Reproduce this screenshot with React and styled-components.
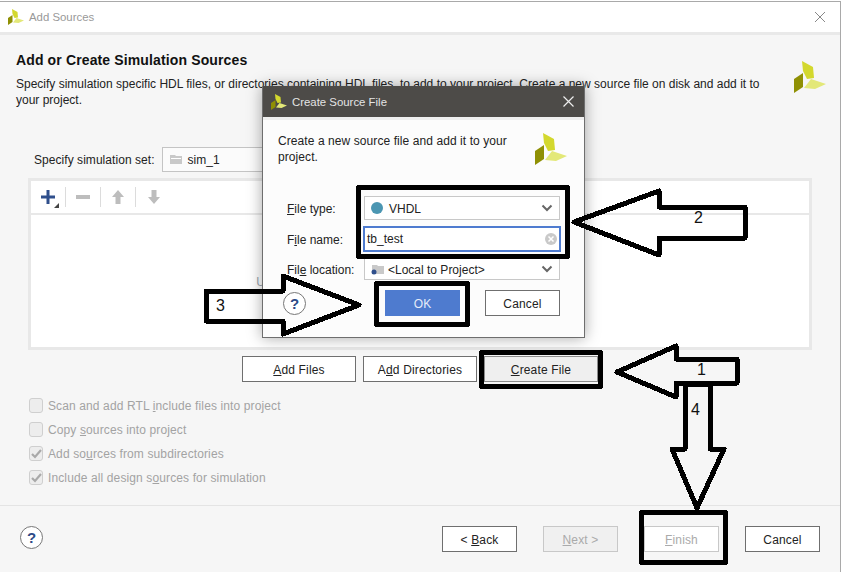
import React from "react";
import styled, { createGlobalStyle } from "styled-components";

const GlobalStyle = createGlobalStyle`
  html, body {
    margin: 0;
    padding: 0;
    background: #fff;
  }
  body {
    font-family: "Liberation Sans", Arial, sans-serif;
    font-size: 12px;
    color: #222;
  }
  * {
    box-sizing: border-box;
  }
`;

const Page = styled.div`
  position: relative;
  width: 842px;
  height: 572px;
  overflow: hidden;
  padding-top: 1px;
`;

const Wizard = styled.div`
  width: 841px;
  height: 571px;
  border-top: 1px solid #a9a9a9;
  border-right: 1px solid #a9a9a9;
  background: #f6f6f6;
  display: flex;
  flex-direction: column;
`;

const TitleBar = styled.div`
  height: 33px;
  flex: none;
  background: #fff;
  border-bottom: 3px solid #e9e9e9;
  display: flex;
  align-items: center;
  padding: 0 14px 0 8px;
  gap: 5px;
  color: #999;
`;

const TitleText = styled.span`
  flex: 1;
  font-size: 11.4px;
`;

const Header = styled.div`
  display: flex;
  justify-content: space-between;
  padding: 15px 14px 0 16px;
  height: 112px;
  flex: none;
`;

const Heading = styled.h1`
  margin: 0 0 6px;
  font-size: 14px;
  line-height: 20px;
  font-weight: bold;
  letter-spacing: 0.13px;
  color: #111;
`;

const Description = styled.p`
  margin: 0;
  width: 745px;
  line-height: 16px;
`;

const LogoSlot = styled.div`
  padding-top: 11px;
`;

const SetRow = styled.div`
  display: flex;
  align-items: center;
  height: 25px;
  margin-left: 34px;
  gap: 7px;
  flex: none;
  letter-spacing: 0.05px;
`;

const SetField = styled.div`
  width: 240px;
  height: 25px;
  border: 1px solid #c4c4c4;
  background: #fbfbfb;
  display: flex;
  align-items: center;
  gap: 6px;
  padding-left: 7px;
`;

const SourcesPanel = styled.div`
  width: 784px;
  height: 172px;
  flex: none;
  margin: 6px 0 0 28px;
  border: 3px solid #e8e8e8;
  background: #fff;
  display: flex;
  flex-direction: column;
`;

const Toolbar = styled.div`
  height: 34px;
  flex: none;
  border-bottom: 2px solid #e8e8e8;
  display: flex;
  align-items: center;
`;

const ToolButton = styled.div`
  position: relative;
  width: 35px;
  height: 20px;
  display: flex;
  align-items: center;
  justify-content: center;
  border-right: ${(p) => (p.$last ? "none" : "1px solid #dcdcdc")};
`;

const MoreMark = styled.span`
  position: absolute;
  right: 6px;
  bottom: -1px;
  width: 0;
  height: 0;
  border-style: solid;
  border-width: 0 0 5px 5px;
  border-color: transparent transparent #444 transparent;
`;

const EmptyHint = styled.div`
  flex: 1;
  display: flex;
  align-items: center;
  justify-content: center;
  padding-top: 1px;
  color: #9aa4ad;
  letter-spacing: 0.2px;
`;

const ActionRow = styled.div`
  display: flex;
  gap: 7px;
  margin: 6px 0 0 242px;
  flex: none;
`;

const Button = styled.div`
  width: ${(p) => p.$width || 75}px;
  height: 26px;
  padding-top: 2px;
  letter-spacing: 0.15px;
  display: flex;
  align-items: center;
  justify-content: center;
  flex: none;
  border: 1px solid ${(p) => (p.$disabled ? "#c8c8c8" : p.$pressed ? "#8c8c8c" : "#6f6f6f")};
  background: ${(p) => (p.$pressed ? "#efefef" : p.$muted ? "#f0f0f0" : "#fff")};
  color: ${(p) => (p.$disabled ? "#aaa" : "#222")};
`;

const PrimaryButton = styled(Button)`
  background: #4e7bcf;
  border-color: #4e7bcf;
  color: #e6ecf8;
`;

const OptionList = styled.div`
  display: flex;
  flex-direction: column;
  gap: 9px;
  margin: 16px 0 0 29px;
  flex: none;
`;

const Option = styled.label`
  display: flex;
  align-items: center;
  gap: 5px;
  height: 15px;
  color: #a3a3a3;
  letter-spacing: 0.12px;
`;

const Box = styled.span`
  width: 14px;
  height: 15px;
  border: 1px solid #cfcfcf;
  border-radius: 3px;
  background: #ededed;
  display: flex;
  align-items: center;
  justify-content: center;
`;

const Footer = styled.div`
  margin-top: 20px;
  border-top: 1px solid #e4e4e4;
  padding: 20px 20px 0;
  display: flex;
  align-items: flex-start;
  justify-content: space-between;
  flex: 1;
`;

const ButtonGroup = styled.div`
  display: flex;
  gap: 26px;
`;

const Help = styled.div`
  width: 23px;
  height: 23px;
  border-radius: 50%;
  border: 1px solid #777;
  background: #fff;
  color: #2c4a86;
  font-size: 15px;
  font-weight: bold;
  display: flex;
  align-items: center;
  justify-content: center;
`;

const Dialog = styled.div`
  position: absolute;
  left: 262px;
  top: 86px;
  width: 323px;
  height: 252px;
  border: 1px solid #6e6e6e;
  border-top: none;
  background: #fcfcfc;
  box-shadow: 0 0 14px rgba(0, 0, 0, 0.35);
  display: flex;
  flex-direction: column;
`;

const DialogBar = styled.div`
  height: 34px;
  flex: none;
  background: #4d4b48;
  border-bottom: 3px solid #efefef;
  display: flex;
  align-items: center;
  gap: 5px;
  padding: 0 10px 0 8px;
  color: #e4e4e4;
`;

const Intro = styled.div`
  display: flex;
  justify-content: space-between;
  padding: 13px 17px 0 15px;
  height: 76px;
  flex: none;
  line-height: 16px;
  letter-spacing: 0.08px;
`;

const IntroText = styled.div`
  width: 240px;
`;

const Form = styled.div`
  display: grid;
  grid-template-columns: 76px 198px;
  grid-template-rows: 24px 26px 22px;
  row-gap: 6px;
  padding-left: 24px;
  align-items: center;
  margin-top: 0;
`;

const FormLabel = styled.span`
  padding-top: 2px;
`;

const Combo = styled.div`
  height: ${(p) => p.$height || 24}px;
  margin: 0 1px;
  border: 1px solid #c8c8c8;
  background: #fff;
  display: flex;
  align-items: center;
  gap: ${(p) => p.$gap || 6}px;
  padding: 0 6px;
`;

const ComboText = styled.span`
  flex: 1;
  color: #222;
  padding-top: 2px;
`;

const Dot = styled.span`
  width: 12px;
  height: 12px;
  border-radius: 50%;
  background: #4b96b2;
`;

const NameField = styled.div`
  height: 26px;
  border: 2px solid #4e7bcf;
  background: #fff;
  display: flex;
  align-items: center;
  justify-content: space-between;
  padding: 0 2px 0 2px;
  color: #222;
`;

const DialogActions = styled.div`
  display: flex;
  align-items: center;
  margin: 10px 0 0 20px;
  gap: 25px;
`;

const DialogHelp = styled(Help)`
  margin-right: 54px;
`;

const Overlay = styled.svg`
  position: absolute;
  left: 0;
  top: 0;
  pointer-events: none;
`;

const Logo = ({ size = 32 }) => (
  <svg width={size} height={size} viewBox="0 0 32 32" style={{ flex: "none" }}>
    <polygon points="8,0 19,6 20,17 13,18 9,10" fill="#d3d82e" />
    <polygon points="0,18 9,12 9,26 0,32" fill="#8f9004" />
    <polygon points="10,27 17,18 32,23 21,28" fill="#e3e878" />
  </svg>
);

const Folder = ({ color = "#c9c9c9" }) => (
  <svg width="12" height="11" viewBox="0 0 12 11">
    <path d="M0 1h5l1 1h6v8H0z" fill={color} />
    <path d="M1 4h10v1H1z" fill="#fff" />
  </svg>
);

const Chevron = () => (
  <svg width="12" height="8" viewBox="0 0 12 8" fill="none">
    <path d="M1.500 1.500 6 6l4.500-4.500" stroke="#666" strokeWidth="2" />
  </svg>
);

const Check = () => (
  <svg width="11" height="10" viewBox="0 0 11 10" fill="none">
    <path d="M1 5l3 3 6-7" stroke="#a9a9a9" strokeWidth="2.2" />
  </svg>
);

const Annotations = () => (
  <Overlay width="842" height="572" viewBox="0 0 842 572">
    <g fill="none" stroke="#000" strokeWidth="5" shapeRendering="crispEdges" strokeLinejoin="round">
      <rect x="358.5" y="187.5" width="209" height="69" />
      <rect x="376.5" y="283.5" width="91" height="41" />
      <rect x="481.5" y="352.5" width="119" height="34" />
      <rect x="641.5" y="512.5" width="84" height="50" />
      <polygon points="206,291 283,291 283,276 359,305 283,334 283,321 206,321" />
      <polygon points="574,222 659,191 659,207 745,207 745,238 659,238 659,255" />
      <polygon points="617,372 676,346 676,359 737,359 737,383 676,383 676,397" />
      <polygon points="685,384 685,449 672,449 697,508 724,449 710,449 710,384" />
    </g>
    <g fontFamily="'Liberation Sans', Arial, sans-serif" fontSize="16" fill="#111">
      <text x="694" y="223">2</text>
      <text x="216" y="311">3</text>
      <text x="697" y="375">1</text>
      <text x="691" y="415">4</text>
    </g>
  </Overlay>
);

export default function App() {
  return (
    <Page>
      <GlobalStyle />
      <Wizard>
        <TitleBar>
          <Logo size={16} />
          <TitleText>Add Sources</TitleText>
          <svg width="12" height="12" viewBox="0 0 12 12">
            <path d="M1 1l10 10M11 1 1 11" stroke="#888" strokeWidth="1" />
          </svg>
        </TitleBar>
        <Header>
          <div>
            <Heading>Add or Create Simulation Sources</Heading>
            <Description>
              Specify simulation specific HDL files, or directories containing HDL files, to add to your project. Create a new source file on disk and add it to your project.
            </Description>
          </div>
          <LogoSlot>
            <Logo />
          </LogoSlot>
        </Header>
        <SetRow>
          <span>Specify simulation set:</span>
          <SetField>
            <Folder />
            <span>sim_1</span>
          </SetField>
        </SetRow>
        <SourcesPanel>
          <Toolbar>
            <ToolButton>
              <svg width="14" height="14" viewBox="0 0 14 14">
                <path d="M5.500 0h3v5.500H14v3H8.500V14h-3V8.500H0v-3h5.500z" fill="#2f4f8c" />
              </svg>
              <MoreMark />
            </ToolButton>
            <ToolButton>
              <svg width="14" height="4" viewBox="0 0 14 4">
                <rect width="14" height="4" fill="#bdbdbd" />
              </svg>
            </ToolButton>
            <ToolButton>
              <svg width="12" height="14" viewBox="0 0 12 14">
                <path d="M6 0l6 7H8.500v7h-5V7H0z" fill="#bdbdbd" />
              </svg>
            </ToolButton>
            <ToolButton $last>
              <svg width="12" height="14" viewBox="0 0 12 14">
                <path d="M6 14 0 7h3.500V0h5v7H12z" fill="#bdbdbd" />
              </svg>
            </ToolButton>
          </Toolbar>
          <EmptyHint>Use Add Files, Add Directories or Create File buttons below</EmptyHint>
        </SourcesPanel>
        <ActionRow>
          <Button $width={114}><span><u>A</u>dd Files</span></Button>
          <Button $width={114}><span>A<u>d</u>d Directories</span></Button>
          <Button $width={114} $pressed><span><u>C</u>reate File</span></Button>
        </ActionRow>
        <OptionList>
          <Option><Box /><span>Scan and add RTL <u>i</u>nclude files into project</span></Option>
          <Option><Box /><span>Copy <u>s</u>ources into project</span></Option>
          <Option><Box><Check /></Box><span>Add so<u>u</u>rces from subdirectories</span></Option>
          <Option><Box><Check /></Box><span>Include all design s<u>o</u>urces for simulation</span></Option>
        </OptionList>
        <Footer>
          <Help>?</Help>
          <ButtonGroup>
            <Button><span>&lt; <u>B</u>ack</span></Button>
            <Button $disabled $muted><span><u>N</u>ext &gt;</span></Button>
            <Button $disabled><span><u>F</u>inish</span></Button>
            <Button><span>Cancel</span></Button>
          </ButtonGroup>
        </Footer>
      </Wizard>

      <Dialog>
        <DialogBar>
          <Logo size={16} />
          <TitleText>Create Source File</TitleText>
          <svg width="11" height="11" viewBox="0 0 11 11">
            <path d="M.5.5l10 10M10.500.5l-10 10" stroke="#eee" strokeWidth="1.2" />
          </svg>
        </DialogBar>
        <Intro>
          <IntroText>Create a new source file and add it to your project.</IntroText>
          <Logo />
        </Intro>
        <Form>
          <FormLabel><u>F</u>ile type:</FormLabel>
          <Combo>
            <Dot />
            <ComboText>VHDL</ComboText>
            <Chevron />
          </Combo>
          <FormLabel>F<u>i</u>le name:</FormLabel>
          <NameField>
            <span>tb_test</span>
            <svg width="12" height="12" viewBox="0 0 12 12">
              <circle cx="6" cy="6" r="6" fill="#c9c9c9" />
              <path d="M3.500 3.500l5 5M8.500 3.500l-5 5" stroke="#fff" strokeWidth="1.500" />
            </svg>
          </NameField>
          <FormLabel>Fil<u>e</u> location:</FormLabel>
          <Combo $height={22} $gap={3}>
            <svg width="14" height="11" viewBox="0 0 14 11">
              <path d="M1 1h5l1 1h6v8H1z" fill="#c9c9c9" />
              <circle cx="3" cy="8" r="2.500" fill="#2f4f8c" />
            </svg>
            <ComboText>&lt;Local to Project&gt;</ComboText>
            <Chevron />
          </Combo>
        </Form>
        <DialogActions>
          <DialogHelp>?</DialogHelp>
          <PrimaryButton>OK</PrimaryButton>
          <Button>Cancel</Button>
        </DialogActions>
      </Dialog>

      <Annotations />
    </Page>
  );
}
